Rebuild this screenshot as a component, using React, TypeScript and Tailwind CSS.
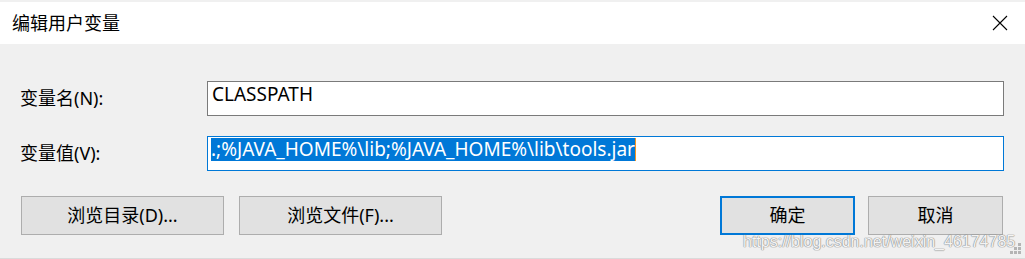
import React from 'react';

const font = "font-['Noto_Sans','Noto_Sans_CJK_SC',sans-serif]";

const CloseIcon = () => (
  <svg width="16" height="16" viewBox="0 0 16 16" className="block">
    <path d="M1 1 L15 15 M15 1 L1 15" stroke="#000" strokeWidth="1.1" fill="none" />
  </svg>
);

// little dotted triangle in the bottom right corner
const Grip = () => (
  <svg width="12" height="12" viewBox="0 0 12 12" className="block">
    {[
      [8, 0],
      [4, 4], [8, 4],
      [0, 8], [4, 8], [8, 8],
    ].map(([x, y], i) => (
      <rect key={i} x={x} y={y} width="3" height="3" fill="#b4b4b4" />
    ))}
  </svg>
);

const Button = ({ label, primary, width }: { label: string; primary?: boolean; width: string }) => (
  <div
    className={`${width} h-[39px] flex items-center justify-center bg-[#e1e1e1] text-[18px] text-black ${
      primary ? 'border-2 border-[#0078d7]' : 'border border-[#adadad]'
    }`}
  >
    {label}
  </div>
);

export default function App() {
  return (
    <div className={`${font} relative w-[1025px] h-[259px] bg-[#f0f0f0] pt-[2px] overflow-hidden border-b border-[#dadada]`}>
      {/* Title bar */}
      <div className="h-[42px] bg-white flex items-center justify-between pl-[12px] pr-[17px]">
        <span className="text-[18px] text-black leading-none">编辑用户变量</span>
        <CloseIcon />
      </div>

      {/* Body */}
      <div className="pt-[37px] pl-[20px] pr-[21px]">
        <div className="flex items-center">
          <div className="w-[187px] text-[18px] text-black">变量名(N):</div>
          <div className="flex-1 h-[35px] bg-white border border-[#7a7a7a] pt-[1px] pl-[4px]">
            <span className="text-[19px] leading-[23px] text-black">CLASSPATH</span>
          </div>
        </div>

        <div className="flex items-center mt-[20px]">
          <div className="w-[187px] text-[18px] text-black">变量值(V):</div>
          <div className="flex-1 h-[35px] bg-white border border-[#0078d7] pt-[1px] pl-[3px] flex items-start">
            <span className="text-[19px] leading-[23px] text-white bg-[#0078d7] whitespace-pre">
              .;%JAVA_HOME%\lib;%JAVA_HOME%\lib\tools.jar
            </span>
            <span className="w-[1px] h-[23px] bg-[#f7941d]" />
          </div>
        </div>

        <div className="flex items-center justify-between mt-[25px] pl-[1px] pr-[1px]">
          <div className="flex gap-[15px]">
            <Button label="浏览目录(D)..." width="w-[203px]" />
            <Button label="浏览文件(F)..." width="w-[203px]" />
          </div>
          <div className="flex gap-[13px]">
            <Button label="确定" primary width="w-[135px]" />
            <Button label="取消" width="w-[135px]" />
          </div>
        </div>
      </div>

      {/* watermark */}
      <div className="absolute left-[743px] top-[230px] font-['Liberation_Sans',sans-serif] text-[16px] text-white/90 [text-shadow:0_0_1px_#8c8c8c,0_0_1px_#8c8c8c,0_0_1px_#8c8c8c] pointer-events-none">
        https://blog.csdn.net/weixin_46174785
      </div>

      <div className="absolute right-[3px] bottom-[3px]">
        <Grip />
      </div>
    </div>
  );
}
